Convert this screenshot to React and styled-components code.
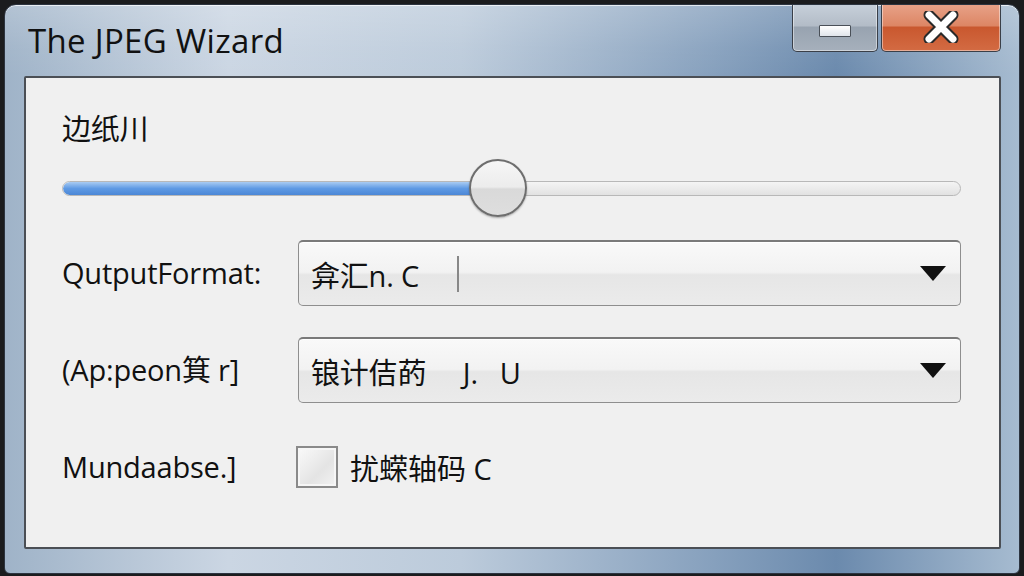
import React from "react";
import styled, { createGlobalStyle } from "styled-components";

const Global = createGlobalStyle`
  html, body {
    margin: 0;
    padding: 0;
    background: #1b1c1e;
    width: 1024px;
    height: 576px;
    overflow: hidden;
  }
  * { box-sizing: border-box; }
`;

const FONT = `"Open Sans", "Noto Sans CJK SC", sans-serif`;

const Window = styled.div`
  margin: 4px 0 0 4px;
  width: 1016px;
  height: 570px;
  border-radius: 12px 12px 6px 6px;
  border: 1px solid #2c3440;
  background: linear-gradient(90deg, #9fb3c8 0%, #cbd6e3 22%, #bccbdb 45%, #86a0bd 70%, #6b8aad 82%, #a6bbd0 100%);
  display: flex;
  flex-direction: column;
  overflow: hidden;
  box-shadow: inset 0 1px 0 rgba(255, 255, 255, 0.7);
`;

const TitleBar = styled.div`
  height: 71px;
  display: flex;
  align-items: flex-start;
  justify-content: space-between;
  padding: 0 18px 0 23px;
  background: linear-gradient(180deg, rgba(255,255,255,0.2) 0%, rgba(255,255,255,0.05) 60%, rgba(0,0,0,0) 100%);
`;

const Title = styled.h1`
  margin: 13px 0 0;
  font-family: ${FONT};
  font-weight: 400;
  font-size: 33px;
  color: #111;
  letter-spacing: 0.3px;
`;

const Controls = styled.div`
  display: flex;
  gap: 3px;
  margin-top: -3px;
`;

const CtrlButton = styled.div`
  width: ${(p) => p.$w}px;
  height: 50px;
  border: 1px solid #3a3f48;
  border-top: none;
  border-radius: 0 0 5px 5px;
  display: flex;
  align-items: center;
  justify-content: center;
  background: ${(p) =>
    p.$close
      ? "linear-gradient(180deg, #e9a58c 0%, #dd8665 48%, #c9582f 52%, #d36b43 100%)"
      : "linear-gradient(180deg, #c9d2dc 0%, #b3bcc7 48%, #98a3b0 52%, #a6b0bc 100%)"};
  box-shadow: inset 0 0 0 1px rgba(255,255,255,0.45);
`;

const MinBar = styled.div`
  width: 32px;
  height: 12px;
  margin-top: 8px;
  background: linear-gradient(180deg, #ffffff, #e0e4ea);
  border: 1px solid #4a5058;
  border-radius: 1px;
`;

const Body = styled.div`
  flex: 1;
  display: flex;
  padding: 0 18px 24px 19px;
`;

const Panel = styled.div`
  flex: 1;
  background: #f0f0f0;
  border: 2px solid #4b4f55;
  border-radius: 2px;
  padding: 34px 38px 0 36px;
  display: flex;
  flex-direction: column;
  font-family: ${FONT};
  color: #111;
`;

const Label = styled.div`
  font-size: 29px;
  line-height: 34px;
  white-space: nowrap;
  letter-spacing: -0.2px;
`;

const SliderWrap = styled.div`
  margin-top: 12px;
  height: 60px;
  display: flex;
  align-items: center;
  position: relative;
`;

const Track = styled.div`
  flex: 1;
  height: 15px;
  border-radius: 8px;
  border: 1px solid #b8b8b8;
  background: linear-gradient(180deg, #f4f4f4, #e2e2e2);
  overflow: hidden;
  display: flex;
`;

const Fill = styled.div`
  height: 100%;
  background: linear-gradient(180deg, #a9cbf2 0%, #5f9ae4 50%, #4c87d6 100%);
  border-radius: 8px 0 0 8px;
`;

const Thumb = styled.div`
  position: absolute;
  top: 1px;
  width: 58px;
  height: 58px;
  margin-left: -29px;
  border-radius: 50%;
  border: 2px solid #6e6e6e;
  background: linear-gradient(180deg, #f6f6f6 0%, #ececec 48%, #d9d9d9 52%, #dedede 100%);
  box-shadow: 0 1px 2px rgba(0,0,0,0.3);
`;

const Form = styled.div`
  margin-top: 22px;
  display: grid;
  grid-template-columns: 236px 1fr;
  grid-auto-rows: 66px;
  row-gap: 31px;
  align-items: center;
`;

const Select = styled.div`
  height: 66px;
  border: 1px solid #8e8e8e;
  border-top: 2px solid #7a7a7a;
  border-radius: 5px;
  background: linear-gradient(180deg, #f9f9f9 0%, #f2f2f2 48%, #e6e6e6 52%, #ebebeb 100%);
  display: flex;
  align-items: center;
  padding: 0 14px 0 12px;
  font-size: 29px;
  letter-spacing: -0.2px;
  box-shadow: inset 0 1px 0 #fff;
`;

const Value = styled.span`
  white-space: pre;
`;

const Caret = styled.span`
  width: 2px;
  height: 36px;
  background: #888;
  margin-left: 38px;
`;

const Arrow = styled.span`
  margin-left: auto;
  width: 0;
  height: 0;
  border-left: 13px solid transparent;
  border-right: 13px solid transparent;
  border-top: 15px solid #111;
`;

const CheckRow = styled.div`
  display: flex;
  align-items: center;
  gap: 12px;
  font-size: 29px;
  height: 44px;
`;

const Box = styled.span`
  width: 42px;
  height: 42px;
  border: 2px solid #8a8a8a;
  background: linear-gradient(135deg, #fafafa 0%, #e4e4e4 60%, #f2f2f2 100%);
  box-shadow: inset 0 0 0 2px #f6f6f6;
  margin-left: -2px;
`;

export default function App() {
  const level = 48.5;
  return (
    <>
      <Global />
      <Window>
        <TitleBar>
          <Title>The JPEG Wizard</Title>
          <Controls>
            <CtrlButton $w={86}>
              <MinBar />
            </CtrlButton>
            <CtrlButton $w={120} $close>
              <svg width="36" height="32" viewBox="0 0 36 32">
                <path d="M6 4 L30 28 M30 4 L6 28" stroke="#2a2a2a" strokeWidth="11" strokeLinecap="round" />
                <path d="M6 4 L30 28 M30 4 L6 28" stroke="#ffffff" strokeWidth="7" strokeLinecap="round" />
              </svg>
            </CtrlButton>
          </Controls>
        </TitleBar>
        <Body>
          <Panel>
            <Label>边纸川</Label>
            <SliderWrap>
              <Track>
                <Fill style={{ width: `${level}%` }} />
              </Track>
              <Thumb style={{ left: `${level}%` }} />
            </SliderWrap>
            <Form>
              <Label>QutputFormat:</Label>
              <Select>
                <Value>弇汇n. C</Value>
                <Caret />
                <Arrow />
              </Select>
              <Label>(Ap:peon箕 r]</Label>
              <Select>
                <Value>锒计佶菂     J.   U</Value>
                <Arrow />
              </Select>
              <Label>Mundaabse.]</Label>
              <CheckRow>
                <Box />
                <span>扰蝾轴码 C</span>
              </CheckRow>
            </Form>
          </Panel>
        </Body>
      </Window>
    </>
  );
}
